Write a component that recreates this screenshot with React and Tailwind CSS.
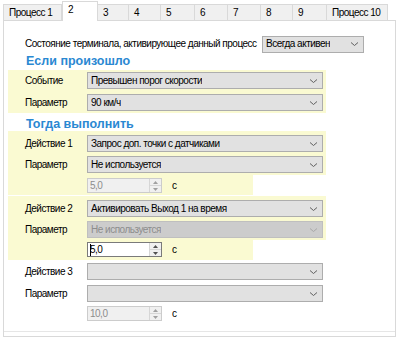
import React from "react";

const tabs = [
  { label: "Процесс 1", w: "w-[59px]" },
  { label: "2", w: "w-[36px]", active: true },
  { label: "3", w: "w-[32px]" },
  { label: "4", w: "w-[33px]" },
  { label: "5", w: "w-[35px]" },
  { label: "6", w: "w-[34px]" },
  { label: "7", w: "w-[34px]" },
  { label: "8", w: "w-[33px]" },
  { label: "9", w: "w-[35px]" },
  { label: "Процесс 10", w: "w-[62px]" },
];

const Chevron = ({ light }) => (
  <svg width="9" height="6" viewBox="0 0 9 6" className="shrink-0">
    <path d="M1 1.5 L4.5 4.5 L8 1.5" fill="none" stroke={light ? "#a8a8a8" : "#606060"} strokeWidth="1" />
  </svg>
);

const Combo = ({ text, w = "w-[236px]", disabled }) => (
  <div
    className={`${w} h-[17px] flex items-center justify-between pl-[3px] pr-[4px] border ${
      disabled ? "bg-[#cccccc] border-[#bfbfbf] text-[#8d8d8d]" : "bg-[#e1e1e1] border-[#adadad] text-black"
    }`}
  >
    <span className="truncate">{text}</span>
    <Chevron light={disabled} />
  </div>
);

const Spinner = ({ value, disabled }) => (
  <div className="flex items-center">
    <div
      className={`w-[75px] h-[15px] flex border ${
        disabled ? "bg-[#f0f0f0] border-[#cccccc] text-[#8d8d8d]" : "bg-white border-[#7a7a7a] text-black"
      }`}
    >
      <div className="flex-1 flex items-center pl-[2px]">
        {!disabled && <span className="w-px h-[12px] bg-black mr-[-1px]" />}
        <span>{value}</span>
      </div>
      <div className="w-[12px] flex flex-col bg-[#f0f0f0] border-l border-[#d6d6d6]">
        <div className="flex-1 flex items-center justify-center border-b border-[#d6d6d6]">
          <svg width="5" height="3" viewBox="0 0 5 3">
            <path d="M0 3 L2.5 0 L5 3 Z" fill={disabled ? "#a0a0a0" : "#505050"} />
          </svg>
        </div>
        <div className="flex-1 flex items-center justify-center">
          <svg width="5" height="3" viewBox="0 0 5 3">
            <path d="M0 0 L2.5 3 L5 0 Z" fill={disabled ? "#a0a0a0" : "#505050"} />
          </svg>
        </div>
      </div>
    </div>
    <span className="ml-[10px] text-black">с</span>
  </div>
);

const Row = ({ label, children }) => (
  <div className="flex items-center h-[17px]">
    <span className="w-[62px] shrink-0">{label}</span>
    {children}
  </div>
);

const Heading = ({ children, pt }) => (
  <div
    className={`h-[18px] pl-[22px] ${pt} text-[12.5px] font-bold leading-[16px] tracking-normal text-[#2a88d2] whitespace-nowrap`}
  >
    {children}
  </div>
);

export default function App() {
  return (
    <div
      className="w-[399px] h-[340px] bg-white text-[10px] leading-[12px] tracking-[-0.5px] text-black overflow-hidden whitespace-nowrap"
      style={{ fontFamily: '"Liberation Sans", Arial, sans-serif' }}
    >
      <div className="flex items-end h-[21px] pl-[3px] -mb-px relative z-10">
        {tabs.map((t) => (
          <div
            key={t.label}
            className={`${t.w} shrink-0 pl-[5px] border border-[#d9d9d9] flex items-center ${
              t.active ? "h-[20px] bg-white border-b-0 pb-[3px]" : "h-[17px] bg-[#f0f0f0] -ml-px first:ml-0"
            }`}
          >
            {t.label}
          </div>
        ))}
      </div>
      <div className="mx-[3px] h-[317px] border border-[#d9d9d9] flex flex-col">
        <div className="flex-1 mb-[4px] border-b border-[#e6e6e6] flex flex-col">
          <div className="flex items-center h-[16px] mt-[15px] pl-[21px]">
            <span className="w-[237px] shrink-0">Состояние терминала, активирующее данный процесс</span>
            <Combo text="Всегда активен" w="w-[102px]" />
          </div>

          <Heading pt="pt-[1px]">Если произошло</Heading>
          <div className="ml-[4px] w-[318px] bg-[#fafad2] pt-[2px] pb-[2px] pl-[17px] flex flex-col gap-[5px]">
            <Row label="Событие">
              <Combo text="Превышен порог скорости" />
            </Row>
            <Row label="Параметр">
              <Combo text="90 км/ч" />
            </Row>
          </div>

          <Heading pt="pt-[3px]">Тогда выполнить</Heading>
          <div className="ml-[4px] w-[318px] bg-[#fafad2] pt-[4px] pb-[2px] pl-[17px] flex flex-col gap-[4px]">
            <Row label="Действие 1">
              <Combo text="Запрос доп. точки с датчиками" />
            </Row>
            <Row label="Параметр">
              <Combo text="Не используется" />
            </Row>
          </div>
          <div className="ml-[4px] w-[245px] h-[20px] bg-[#fafad2] pl-[79px] pt-[3px]">
            <Spinner value="5,0" disabled />
          </div>

          <div className="mt-[1px] ml-[4px] w-[318px] bg-[#fafad2] pt-[4px] pb-[2px] pl-[17px] flex flex-col gap-[4px]">
            <Row label="Действие 2">
              <Combo text="Активировать Выход 1 на время" />
            </Row>
            <Row label="Параметр">
              <Combo text="Не используется" disabled />
            </Row>
          </div>
          <div className="ml-[4px] w-[245px] h-[20px] bg-[#fafad2] pl-[79px] pt-[2px]">
            <Spinner value="5,0" />
          </div>

          <div className="mt-[3px] ml-[4px] pl-[17px] flex flex-col gap-[5px]">
            <Row label="Действие 3">
              <Combo text="" />
            </Row>
            <Row label="Параметр">
              <Combo text="" />
            </Row>
          </div>
          <div className="ml-[4px] pl-[79px] mt-[4px]">
            <Spinner value="10,0" disabled />
          </div>
        </div>
      </div>
    </div>
  );
}
